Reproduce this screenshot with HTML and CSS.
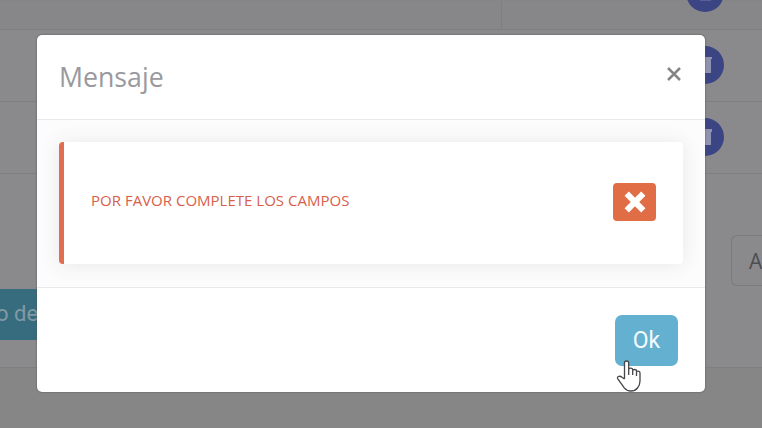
FILE: index.html
```html
<!DOCTYPE html>
<html lang="es">
<head>
<meta charset="utf-8">
<title>Mensaje</title>
<link rel="stylesheet" href="styles.css">
</head>
<body>
<main class="page">
  <section class="table">
    <div class="row row-first"><div class="cell"></div><div class="actions"><span class="round"><svg viewBox="0 0 38 38"><path class="bin" d="M11 12h13v3h-1v12H12V15h-1z"/></svg></span></div></div>
    <div class="row"><div class="actions"><span class="round"><svg viewBox="0 0 38 38"><path class="bin" d="M11 11h13v2h-1v14H12V13h-1z"/></svg></span></div></div>
    <div class="row"><div class="actions"><span class="round"><svg viewBox="0 0 38 38"><path class="bin" d="M11 11h13v3h-1v13H12V14h-1z"/></svg></span></div></div>
  </section>
  <section class="controls">
    <div class="pager">A</div>
    <div class="bg-button">o de</div>
  </section>
  <footer class="page-footer"></footer>
</main>
<div class="modal" role="dialog">
  <header class="modal-header">
    <h1 class="title">Mensaje</h1>
    <svg class="close" viewBox="0 0 16 16"><path d="M2 2l12 12M14 2L2 14"/></svg>
  </header>
  <div class="modal-body">
    <div class="alert">
      <span class="message">POR FAVOR COMPLETE LOS CAMPOS</span>
      <span class="error"><svg viewBox="0 0 24 24"><path d="M3.700 3.700l16.600 16.600M20.300 3.700L3.700 20.300"/></svg></span>
    </div>
  </div>
  <footer class="modal-footer"><button class="ok">Ok</button></footer>
</div>
<svg class="cursor" viewBox="0 0 26 34"><path d="M8.500 20V4Q8.500 2 10.600 2t2.100 2v8M12.700 16V10.500q0-1.300 2-1.300t2 1.500V16M16.700 11.500q0-1 1.900-1t1.900 1.300V17M20.500 13q0-1 1.700-.8 1.800.2 1.800 1.800V22q0 4-2.500 7-2.400 3-6.600 3-4.100 0-6.600-3.200L2 20.200Q.8 18.400 2.300 17.500q2-.7 3.700.7L8.500 20"/></svg>
</body>
</html>
```
FILE: styles.css
```css
* { box-sizing: border-box; }
body {
  margin: 0;
  width: 762px;
  height: 428px;
  overflow: hidden;
  background: #8a8a8c;
  font-family: "Open Sans", "Noto Sans", sans-serif;
}
.page { display: flex; flex-direction: column; height: 428px; }
.table { height: 173px; flex: none; border-top: 1px solid #858586; }
.row {
  display: flex;
  align-items: center;
  justify-content: flex-end;
  height: 72px;
  border-bottom: 1px solid #7f7f81;
}
.row-first { height: 29px; background: #878789; }
.cell { width: 502px; height: 28px; margin-right: auto; border-right: 1px solid #7f7f81; }
.actions { display: flex; width: 76px; }
.row-first .actions { align-self: flex-start; margin-top: -27px; }
.round { width: 38px; height: 38px; border-radius: 50%; background: #3c4583; }
.row:not(.row-first) .round { margin-top: -1px; }
.round svg { display: block; width: 38px; height: 38px; }
.bin { fill: #8f93b0; transform: translateX(2px); }
.row-first .bin { fill: #596094; }
.controls { display: flex; flex-direction: column; height: 194px; padding-top: 62px; }
.pager {
  align-self: flex-end;
  width: 31px;
  height: 51px;
  padding-left: 17px;
  border: 1px solid #7b7b7d;
  border-right: 0;
  border-radius: 6px 0 0 6px;
  color: #4d4d50;
  font-size: 21px;
  line-height: 50px;
}
.bg-button {
  width: 60px;
  height: 51px;
  margin-top: 3px;
  background: #366c7e;
  color: #829aa5;
  font: 22px/50px Roboto, sans-serif;
  text-indent: -4px;
  white-space: nowrap;
}
.page-footer { flex: 1; background: #868686; border-top: 1px solid #7f7f80; }
.modal {
  position: absolute;
  left: 37px;
  top: 35px;
  display: flex;
  flex-direction: column;
  width: 668px;
  height: 357px;
  border-radius: 5px;
  background: #fff;
  box-shadow: 0 0 2px #505052;
}
.modal-header {
  display: flex;
  justify-content: space-between;
  height: 85px;
  padding: 23px 23px 0 22px;
  border-bottom: 1px solid #e9e9eb;
}
.title { margin: 0; color: #99999e; font-size: 26.700px; line-height: 38px; font-weight: 400; }
.close { width: 16px; height: 16px; margin-top: 8px; fill: none; stroke: #858585; stroke-width: 2.500; }
.modal-body { height: 168px; padding: 22px 22px 0; border-bottom: 1px solid #e9e9eb; background: #fcfcfc; overflow: hidden; }
.alert {
  display: flex;
  align-items: center;
  justify-content: space-between;
  height: 122px;
  padding: 0 27px 4px 27px;
  border-left: 5px solid #df6f50;
  border-radius: 4px;
  background: #fff;
  box-shadow: 0 1px 20px rgba(60, 60, 80, .1);
}
.message { margin-top: -2px; color: #d8604b; font-size: 15px; line-height: 20px; letter-spacing: .01px; white-space: nowrap; }
.error { width: 43px; height: 38px; margin-top: 1px; border-radius: 4px; background: #e16d46; }
.error svg { display: block; width: 24px; height: 24px; margin: 7px auto 0; fill: none; stroke: #fff; stroke-width: 6; }
.modal-footer { display: flex; justify-content: flex-end; padding: 27px 27px 0 0; }
.ok { width: 63px; height: 51px; padding: 0; border: 0; border-radius: 7px; background: #63b0d0; color: #f4fbff; font: 23px/50px Roboto, sans-serif; }
.cursor { position: absolute; left: 616px; top: 359px; width: 26px; height: 34px; fill: #fff; stroke: #45454a; stroke-width: 1.300; stroke-linejoin: round; }
```
